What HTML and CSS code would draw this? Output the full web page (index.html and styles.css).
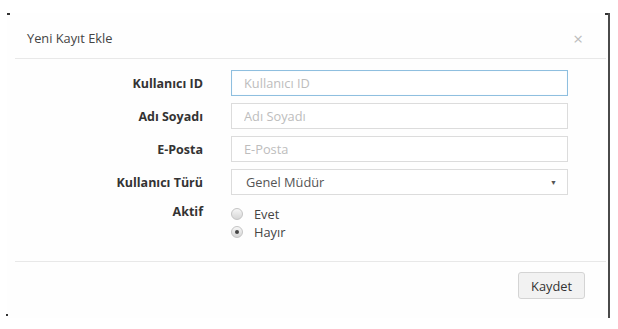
FILE: index.html
```html
<!DOCTYPE html>
<html lang="tr">
<head>
<meta charset="utf-8">
<title>Yeni Kayıt Ekle</title>
<link rel="stylesheet" href="styles.css">
</head>
<body>
<div class="modal">
  <span class="mark mark-tl"></span>
  <span class="mark mark-tr"></span>
  <span class="mark mark-bl"></span>
  <div class="modal-header">
    <h4 class="title">Yeni Kayıt Ekle</h4>
    <span class="close">×</span>
  </div>
  <div class="divider"></div>
  <form class="modal-body">
    <label class="lbl">Kullanıcı ID</label>
    <input class="field focus" type="text" placeholder="Kullanıcı ID">
    <label class="lbl">Adı Soyadı</label>
    <input class="field" type="text" placeholder="Adı Soyadı">
    <label class="lbl">E-Posta</label>
    <input class="field" type="text" placeholder="E-Posta">
    <label class="lbl">Kullanıcı Türü</label>
    <div class="field select"><span>Genel Müdür</span><span class="caret">▼</span></div>
    <label class="lbl lbl-top">Aktif</label>
    <div class="radios">
      <div class="radio"><span class="dot"></span><span>Evet</span></div>
      <div class="radio"><span class="dot checked"></span><span>Hayır</span></div>
    </div>
  </form>
  <div class="divider"></div>
  <div class="modal-footer">
    <button class="btn" type="button">Kaydet</button>
  </div>
</div>
</body>
</html>
```

FILE: styles.css
```css
* { box-sizing: border-box; }
html, body { margin: 0; padding: 0; background: #ffffff; }
body {
  font-family: "Open Sans", "Noto Sans", sans-serif;
  color: #333;
  padding: 13px 0 0 7px;
}
.modal {
  position: relative;
  width: 603px;
  height: 305px;
  background: #fefefe;
  border-right: 2px solid #4a4a4a;
}
.mark { position: absolute; background: #333; }
.mark-tl { left: 0; top: 0; width: 3px; height: 2px; }
.mark-tr { right: 0; top: 0; width: 3px; height: 2px; }
.mark-bl { left: -1px; bottom: 2px; width: 2px; height: 2px; }
.modal-header {
  height: 45px;
  display: flex;
  align-items: center;
  justify-content: space-between;
  padding: 5px 25px 0 20px;
}
.title {
  margin: 0;
  font-size: 12.8px;
  font-weight: 400;
  color: #444;
}
.close { font-size: 17px; color: #bcbcbc; line-height: 1; }
.divider {
  height: 1px;
  background: #e8e8e8;
  margin: 0 2px 0 8px;
}
.modal-body {
  display: grid;
  grid-template-columns: 196px 337px;
  column-gap: 28px;
  row-gap: 7px;
  padding: 11px 0 0 0;
  height: 202px;
  align-content: start;
}
.lbl {
  font-size: 12.5px;
  font-weight: 700;
  color: #333;
  text-align: right;
  align-self: center;
}
.lbl-top { align-self: start; padding-top: 1px; }
.field {
  height: 26px;
  border: 1px solid #dcdcdc;
  background: #fff;
  font-family: inherit;
  font-size: 12.8px;
  padding: 0 12px;
  color: #555;
  outline: none;
  margin: 0;
  border-radius: 0;
}
.field::placeholder { color: #bdbdbd; }
.field.focus { border-color: #8fbfdf; box-shadow: inset 0 0 1px rgba(102,175,233,0.3); }
.select {
  display: flex;
  align-items: center;
  justify-content: space-between;
  padding: 0 10px 0 14px;
  font-size: 12.8px;
}
.caret { font-size: 7px; color: #555; }
.radios { display: flex; flex-direction: column; padding-top: 3px; }
.radio {
  display: flex;
  align-items: center;
  height: 18px;
  font-size: 12.8px;
  color: #444;
}
.dot {
  width: 12px;
  height: 12px;
  border-radius: 50%;
  border: 1px solid #c4c4c4;
  background: linear-gradient(#f6f6f6, #d6d6d6);
  margin: 0 11px 0 0;
  position: relative;
}
.dot.checked::after {
  content: "";
  position: absolute;
  left: 3px; top: 3px;
  width: 4px; height: 4px;
  border-radius: 50%;
  background: #444;
}
.modal-footer {
  display: flex;
  justify-content: flex-end;
  padding: 10px 23px 0 0;
}
.btn {
  height: 27px;
  padding: 0 12px;
  font-family: inherit;
  font-size: 12.8px;
  color: #333;
  background: #f2f2f2;
  border: 1px solid #d4d4d4;
  border-radius: 3px;
}
```
